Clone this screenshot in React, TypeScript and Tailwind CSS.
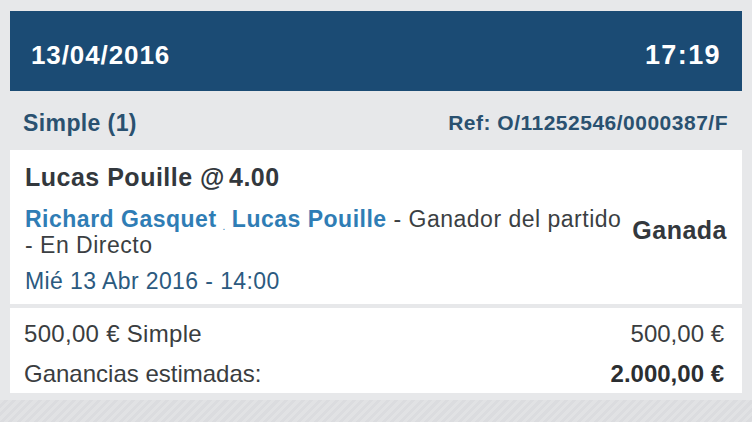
import React from "react";

function Header() {
  return (
    <div className="flex h-[80px] items-center justify-between bg-[#1b4b74] px-[21px] pt-[8px] text-white">
      <span className="text-[26px] font-bold leading-[30px] tracking-[0.9px]">13/04/2016</span>
      <span className="text-[27px] font-bold leading-[30px] tracking-[1.4px]">17:19</span>
    </div>
  );
}

function BetType() {
  return (
    <div className="flex h-[59px] items-center justify-between pl-[13px] pr-[14px] pt-[4px] text-[#2a5170]">
      <span className="text-[23px] font-bold leading-[28px] tracking-[0.4px]">Simple (1)</span>
      <span className="text-[21px] font-bold leading-[28px] tracking-[0.5px]">Ref: O/11252546/0000387/F</span>
    </div>
  );
}

function Selection() {
  return (
    <div className="flex h-[154px] items-center bg-white pl-[15px] pr-[15px]">
      <div className="flex h-full flex-1 flex-col pt-[12px]">
        <div className="text-[25px] font-bold leading-[30px] tracking-[0.5px] text-[#33383d]">
          Lucas Pouille @<span className="ml-[4px]">4.00</span>
        </div>
        <div className="mt-[14px] text-[23px] leading-[26px] tracking-[0.5px] text-[#3b3f43]">
          <span className="font-bold text-[#2f7db5]">Richard Gasquet</span>
          <span className="mx-[6px] align-[-3px] text-[10px] leading-none text-[#2f7db5]">.</span>
          <span className="font-bold text-[#2f7db5]">Lucas Pouille</span>
          <span> - Ganador del partido</span>
          <br />
          <span>- En Directo</span>
        </div>
        <div className="mt-[10px] text-[23px] leading-[26px] tracking-[0.4px] text-[#2b5a80]">
          Mié 13 Abr 2016 - 14:00
        </div>
      </div>
      <div className="pt-[6px] text-[25px] font-bold leading-[30px] tracking-[0.5px] text-[#33383d]">Ganada</div>
    </div>
  );
}

function Summary() {
  return (
    <div className="mt-[4px] flex h-[85px] flex-col bg-white pl-[14px] pr-[18px] pt-[6px] text-[24px] text-[#3a3d40]">
      <div className="flex h-[40px] items-center justify-between leading-[40px]">
        <span className="tracking-[0.3px]">500,00 € Simple</span>
        <span>500,00 €</span>
      </div>
      <div className="flex h-[40px] items-center justify-between leading-[40px]">
        <span>Ganancias estimadas:</span>
        <span className="font-bold text-[#2b2e31]">2.000,00 €</span>
      </div>
    </div>
  );
}

export default function App() {
  return (
    <div className="flex h-[422px] w-[752px] flex-col overflow-hidden bg-[#e7e8ea] font-['Liberation_Sans',Arial,sans-serif]">
      <div className="flex flex-col px-[10px] pt-[11px]">
        <Header />
        <BetType />
        <Selection />
        <Summary />
      </div>
      {/* faint zigzag edge under the ticket */}
      <div className="mt-[7px] flex-1 bg-[#dedfe1] bg-[repeating-linear-gradient(135deg,#e1e2e4_0px,#e1e2e4_3px,#dbdcdf_3px,#dbdcdf_6px)]" />
    </div>
  );
}
